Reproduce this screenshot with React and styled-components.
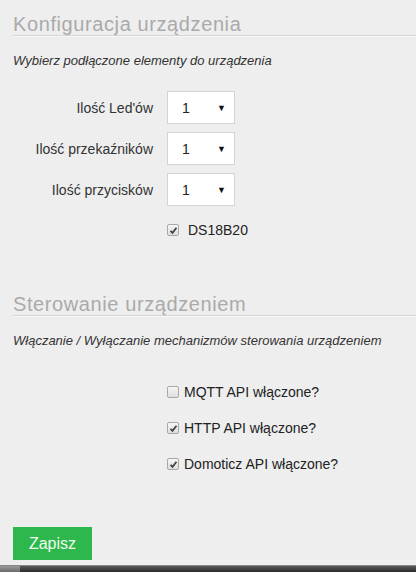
import React from "react";
import styled, { createGlobalStyle } from "styled-components";

const GlobalStyle = createGlobalStyle`
  html, body {
    margin: 0;
    padding: 0;
    background: #eeeeee;
    font-family: "Liberation Sans", Arial, sans-serif;
    color: #333;
  }
`;

const Page = styled.div`
  height: 572px;
  display: flex;
  flex-direction: column;
  overflow: hidden;
`;

const Content = styled.div`
  flex: 1;
  min-height: 0;
  overflow: hidden;
  padding: 13px 0 0 13px;
`;

const Section = styled.section`
  margin-bottom: ${(p) => p.$gap || 0}px;
`;

const Heading = styled.h2`
  margin: 0;
  font-size: 20px;
  font-weight: normal;
  line-height: 22px;
  letter-spacing: 0.6px;
  color: #aaaaaa;
  border-bottom: 1px solid #d6d6d6;
  box-shadow: 0 1px 0 #f6f6f6;
`;

const Lead = styled.p`
  margin: 17px 0 0;
  font-size: 13px;
  line-height: 16px;
  font-style: italic;
  color: #333;
`;

const FormGrid = styled.div`
  display: grid;
  grid-template-columns: 140px 68px;
  column-gap: 14px;
  row-gap: 8px;
  margin-top: 22px;
  align-items: center;
`;

const Label = styled.label`
  text-align: right;
  font-size: 14px;
  color: #333;
`;

const SelectBox = styled.div`
  height: 33px;
  box-sizing: border-box;
  background: #fff;
  border: 1px solid #d4d4d4;
  display: flex;
  align-items: center;
  justify-content: space-between;
  padding: 0 8px 0 14px;
  font-size: 14px;
  color: #222;
`;

const Arrow = styled.span`
  font-size: 9px;
  color: #111;
`;

const CheckList = styled.div`
  display: flex;
  flex-direction: column;
  gap: ${(p) => p.$gap}px;
  margin-top: ${(p) => p.$top}px;
  padding-left: 154px;
`;

const CheckRow = styled.div`
  display: flex;
  align-items: center;
  gap: ${(p) => p.$gap}px;
  font-size: 14px;
  line-height: 16px;
  color: #222;
`;

const Box = styled.span`
  width: 12px;
  height: 12px;
  box-sizing: border-box;
  border: 1px solid #a9a9a9;
  border-radius: 2px;
  background: linear-gradient(#f6f6f6, #dedede);
  display: flex;
  align-items: center;
  justify-content: center;
`;

const SaveButton = styled.button`
  width: 79px;
  height: 33px;
  border: none;
  background: #2eb74d;
  color: #eefcee;
  font-family: "Liberation Sans", Arial, sans-serif;
  font-size: 16px;
  padding: 0;
  cursor: pointer;
`;

const Footer = styled.div`
  flex: none;
`;

const ScrollBar = styled.div`
  height: 6px;
  display: flex;
  background: linear-gradient(#5a5a5a, #2a2a2a);
  border-top: 1px solid #888;
`;

const ScrollStart = styled.div`
  width: 20px;
  background: linear-gradient(#9a9a9a, #6a6a6a);
`;

function Checkbox({ checked }) {
  return (
    <Box>
      {checked && (
        <svg width="9" height="9" viewBox="0 0 9 9">
          <path
            d="M1.5 4.8 L3.5 6.8 L7.5 1.8"
            fill="none"
            stroke="#444"
            strokeWidth="1.8"
          />
        </svg>
      )}
    </Box>
  );
}

const SELECTS = ["Ilość Led'ów", "Ilość przekaźników", "Ilość przycisków"];

const APIS = [
  { label: "MQTT API włączone?", checked: false },
  { label: "HTTP API włączone?", checked: true },
  { label: "Domoticz API włączone?", checked: true },
];

export default function App() {
  return (
    <Page>
      <GlobalStyle />
      <Content>
        <Section $gap={55}>
          <Heading>Konfiguracja urządzenia</Heading>
          <Lead>Wybierz podłączone elementy do urządzenia</Lead>
          <FormGrid>
            {SELECTS.map((label) => (
              <React.Fragment key={label}>
                <Label>{label}</Label>
                <SelectBox>
                  <span>1</span>
                  <Arrow>▼</Arrow>
                </SelectBox>
              </React.Fragment>
            ))}
          </FormGrid>
          <CheckList $gap={0} $top={16}>
            <CheckRow $gap={9}>
              <Checkbox checked />
              <span>DS18B20</span>
            </CheckRow>
          </CheckList>
        </Section>

        <Section $gap={55}>
          <Heading>Sterowanie urządzeniem</Heading>
          <Lead>Włączanie / Wyłączanie mechanizmów sterowania urządzeniem</Lead>
          <CheckList $gap={20} $top={35}>
            {APIS.map((api) => (
              <CheckRow key={api.label} $gap={5}>
                <Checkbox checked={api.checked} />
                <span>{api.label}</span>
              </CheckRow>
            ))}
          </CheckList>
        </Section>

        <SaveButton>Zapisz</SaveButton>
      </Content>
      <Footer>
        <ScrollBar>
          <ScrollStart />
        </ScrollBar>
      </Footer>
    </Page>
  );
}
